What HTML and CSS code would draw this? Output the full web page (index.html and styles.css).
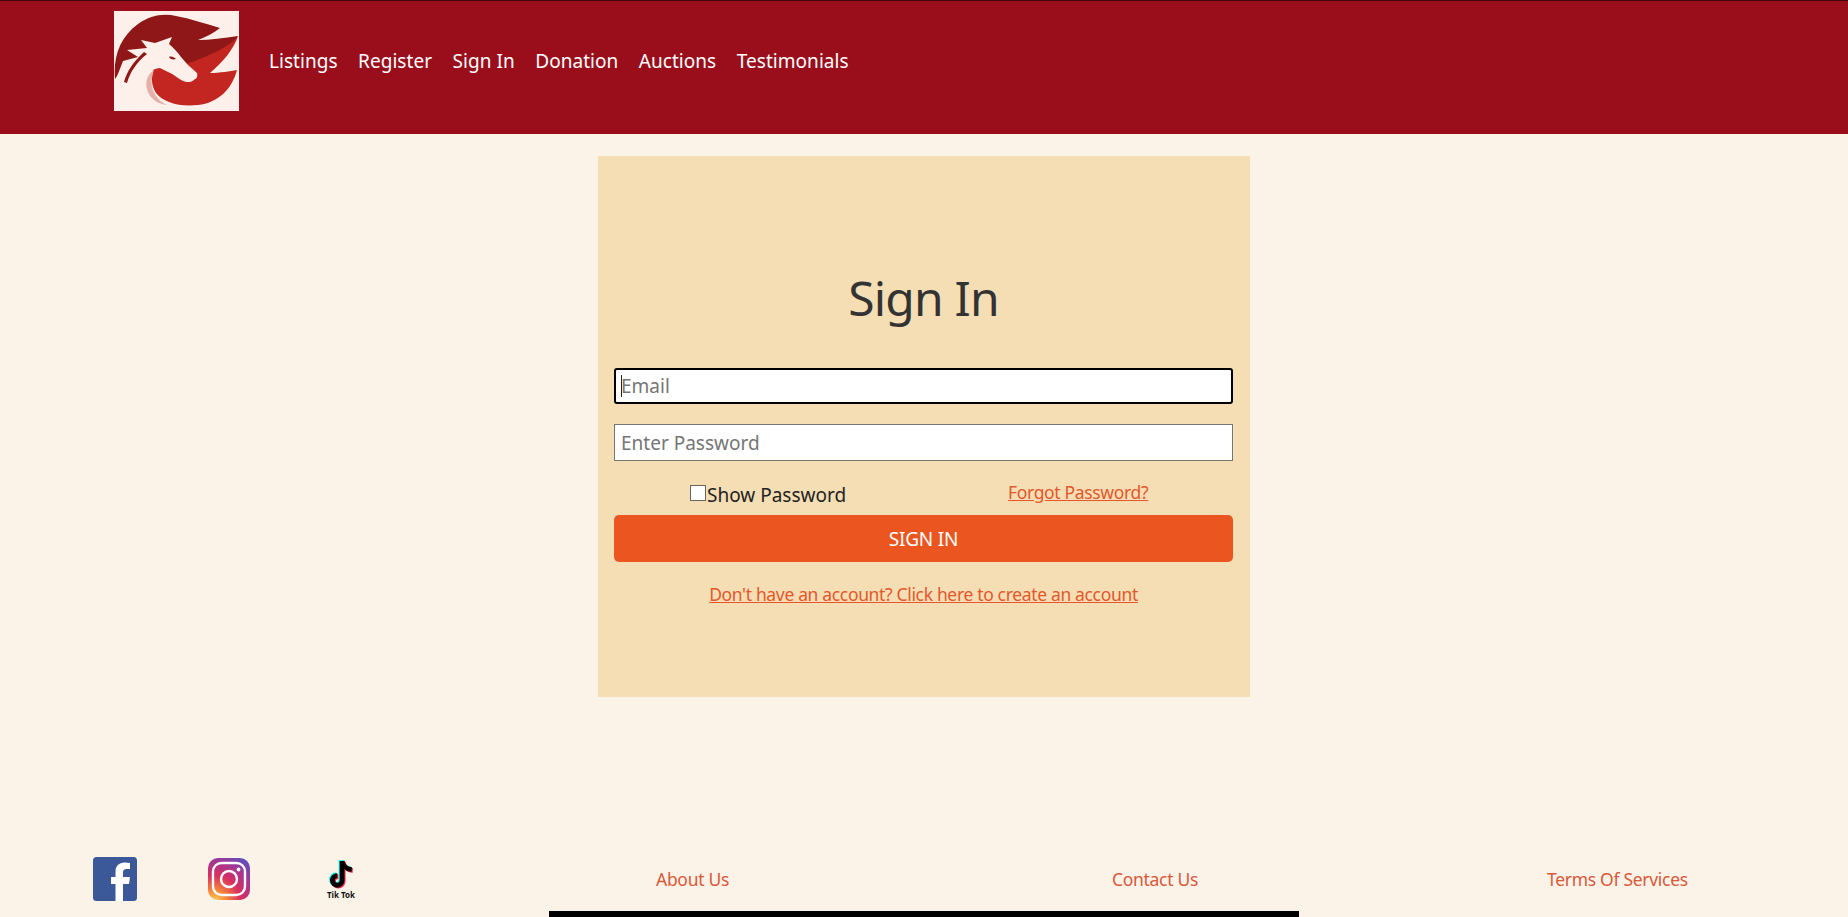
FILE: index.html
```html
<!DOCTYPE html>
<html lang="en">
<head>
<meta charset="utf-8">
<title>Sign In</title>
<link rel="stylesheet" href="styles.css">
</head>
<body>
<header class="site-header">
  <a class="logo" href="#" aria-label="Home">
    <svg viewBox="0 0 125 100" width="125" height="100">
      <rect width="125" height="100" fill="#fdf0ea"/>
      <path d="M74 52L124 25C120 38 108 52 96 62C106 62 116 60 123 59C118 78 104 92 84 94C66 96 50 92 42 82C37 74 37 66 40 56Z" fill="#c32620"/>
      <path d="M1 68C-1 46 6 26 24 13C36 4 50 2 62 5C78 8 92 13 106 17C100 22 92 26 84 29C96 29 110 27 124 25C116 36 96 44 73 53L40 50L12 52Z" fill="#8f1717"/>
      <path d="M27 29L41 32L58 26L55 33C60 37 64 42 67 46L74 54L83 62C84 66 82 68 81 68C78 71 76 71 74 71C70 71 67 69 64 67C60 64 57 62 54 61L46 57C43 57 41 58 39 59L35 68L36 80L45 100H0V70L2 68L9 50L24 46L13 39L33 37Z" fill="#fdf0ea"/>
      <path d="M40 59C32 64 30 74 35 83C38 89 45 93 53 94C45 90 40 84 38 76C37 70 38 64 40 59Z" fill="#e5b0aa"/>
      <path d="M10 71L13 72C16 61 23 51 33 43L30 41C20 50 13 60 10 71Z" fill="#8f1717"/>
      <path d="M55 46C57 45 60 46 62 48C59 49 56 48 55 46Z" fill="#8f1717"/>
    </svg>
  </a>
  <nav class="main-nav">
    <a href="#">Listings</a>
    <a href="#">Register</a>
    <a href="#">Sign In</a>
    <a href="#">Donation</a>
    <a href="#">Auctions</a>
    <a href="#">Testimonials</a>
  </nav>
</header>

<main class="page">
  <form class="card">
    <h1 class="card-title">Sign In</h1>
    <input class="field field-email" type="email" placeholder="Email">
    <input class="field" type="password" placeholder="Enter Password">
    <div class="options">
      <label class="show-password"><input class="check" type="checkbox">Show Password</label>
      <a class="link forgot" href="#">Forgot Password?</a>
    </div>
    <button class="submit" type="button">SIGN IN</button>
    <a class="link create" href="#">Don't have an account? Click here to create an account</a>
  </form>
</main>

<footer class="site-footer">
  <div class="footer-row">
    <div class="socials">
      <a class="social social-fb" href="#" aria-label="Facebook">
        <svg viewBox="0 0 44 44" width="44" height="44">
          <rect width="44" height="44" rx="3.5" fill="#3b5998"/>
          <path d="M30 44V27H36L37 20H30V15.500C30 13.500 31 12 33.500 12H37V6C35.500 5.700 33.500 5.500 31.500 5.500C26 5.500 22.500 9 22.500 14.500V20H18V27H22.500V44Z" fill="#fff"/>
        </svg>
      </a>
      <a class="social social-ig" href="#" aria-label="Instagram">
        <svg viewBox="0 0 42 42" width="42" height="42">
          <defs>
            <radialGradient id="ig" cx="0.15" cy="1.05" r="1.25">
              <stop offset="0" stop-color="#fdd35a"/>
              <stop offset="0.25" stop-color="#f4823c"/>
              <stop offset="0.5" stop-color="#d9305e"/>
              <stop offset="0.75" stop-color="#a9358f"/>
              <stop offset="1" stop-color="#5b4fc0"/>
            </radialGradient>
          </defs>
          <rect width="42" height="42" rx="10" fill="url(#ig)"/>
          <rect x="5" y="5" width="32" height="32" rx="8.500" fill="none" stroke="#fff" stroke-width="2.400"/>
          <circle cx="21" cy="21" r="8" fill="none" stroke="#fff" stroke-width="2.400"/>
          <circle cx="30.500" cy="11.500" r="1.900" fill="#fff"/>
        </svg>
      </a>
      <a class="social social-tt" href="#" aria-label="Tik Tok">
        <svg viewBox="0 0 26 28" width="28" height="30">
          <g fill="none" stroke-width="4.500">
            <g stroke="#25f4ee" transform="translate(-1 -.8)">
              <path d="M14 2V20A4.500 4.500 0 1 1 9.500 15.500"/>
              <path d="M14 2C14.500 6 18 9.500 23 10"/>
            </g>
            <g stroke="#fe2c55" transform="translate(1 .8)">
              <path d="M14 2V20A4.500 4.500 0 1 1 9.500 15.500"/>
              <path d="M14 2C14.500 6 18 9.500 23 10"/>
            </g>
            <g stroke="#000">
              <path d="M14 2V20A4.500 4.500 0 1 1 9.500 15.500"/>
              <path d="M14 2C14.500 6 18 9.500 23 10"/>
            </g>
          </g>
        </svg>
        <span class="tt-label">Tik Tok</span>
      </a>
    </div>
    <a class="foot-link" href="#">About Us</a>
    <a class="foot-link" href="#">Contact Us</a>
    <a class="foot-link" href="#">Terms Of Services</a>
  </div>
  <div class="black-bar"></div>
</footer>
</body>
</html>
```

FILE: styles.css
```css
* { box-sizing: border-box; }
body {
  margin: 0;
  height: 917px;
  overflow: hidden;
  display: flex;
  flex-direction: column;
  background: #fbf3e7;
  font-family: "Noto Sans", "Open Sans", sans-serif;
  color: #333;
}
a { color: inherit; }

.site-header {
  height: 134px;
  background: #9a0e1c;
  border-top: 1px solid #3d0a10;
  display: flex;
  align-items: center;
  padding: 10px 0 23px 114px;
}
.logo { display: block; width: 125px; height: 100px; margin-right: 30px; }
.logo svg { display: block; }
.main-nav { display: flex; gap: 20.5px; }
.main-nav a {
  color: #fff;
  text-decoration: none;
  font-size: 19px;
  line-height: 24px;
  letter-spacing: .04px;
}

.page {
  flex: 1;
  padding-top: 22px;
  display: flex;
  justify-content: center;
  align-items: flex-start;
}
.card {
  width: 652px;
  height: 541px;
  background: #f5deb3;
  padding: 110px 17px 0 16px;
  display: flex;
  flex-direction: column;
}
.card-title {
  margin: 0;
  font-size: 48px;
  line-height: 64px;
  font-weight: 400;
  letter-spacing: -.8px;
  text-align: center;
  color: #333;
}
.field {
  display: block;
  width: 100%;
  height: 37px;
  margin-top: 20px;
  padding: 0 6px;
  border: 1px solid #767676;
  background: #fff;
  font-family: inherit;
  font-size: 19px;
}
.field::placeholder { color: #757575; opacity: 1; }
.field-email {
  margin-top: 38px;
  height: 36px;
  border: 2px solid #000;
  border-radius: 3px;
  padding: 0 5px;
  background: linear-gradient(#222, #222) 5px center / 1px 22px no-repeat, #fff;
}

.options {
  display: flex;
  height: 54px;
  align-items: center;
  padding: 13px 0 0 76px;
  font-size: 19px;
}
.show-password { display: flex; align-items: center; width: 318px; color: #222; }
.check {
  appearance: none;
  width: 16px;
  height: 16px;
  margin: -3px 1px 0 0;
  border: 1.5px solid #666;
  background: #fff;
}
.link { color: #e4572e; font-size: 17.5px; letter-spacing: -.34px; }
.forgot { margin-top: -5px; }
.submit {
  display: block;
  width: 100%;
  height: 47px;
  flex: none;
  border: 0;
  border-radius: 5px;
  background: #eb5620;
  color: #fff;
  font-family: inherit;
  font-size: 19px;
  letter-spacing: -.2px;
}
.create { margin-top: 20px; text-align: center; line-height: 24px; }

.site-footer { flex: none; }
.footer-row {
  height: 62px;
  display: grid;
  grid-template-columns: 563px 456px 435px 1fr;
  align-items: center;
  padding: 0 0 2px 93px;
}
.socials { display: flex; align-items: center; }
.social { display: block; text-decoration: none; }
.social svg { display: block; }
.social-fb { margin-right: 71px; }
.social-ig { margin-right: 76px; }
.social-tt { width: 30px; display: flex; flex-direction: column; align-items: center; }
.tt-label {
  font-size: 8px;
  line-height: 11px;
  font-weight: 700;
  color: #111;
  white-space: nowrap;
}
.foot-link {
  color: #d9583a;
  text-decoration: none;
  font-size: 17.5px;
  letter-spacing: -.3px;
}
.black-bar { width: 750px; height: 6px; margin: 0 auto; background: #000; }
```
